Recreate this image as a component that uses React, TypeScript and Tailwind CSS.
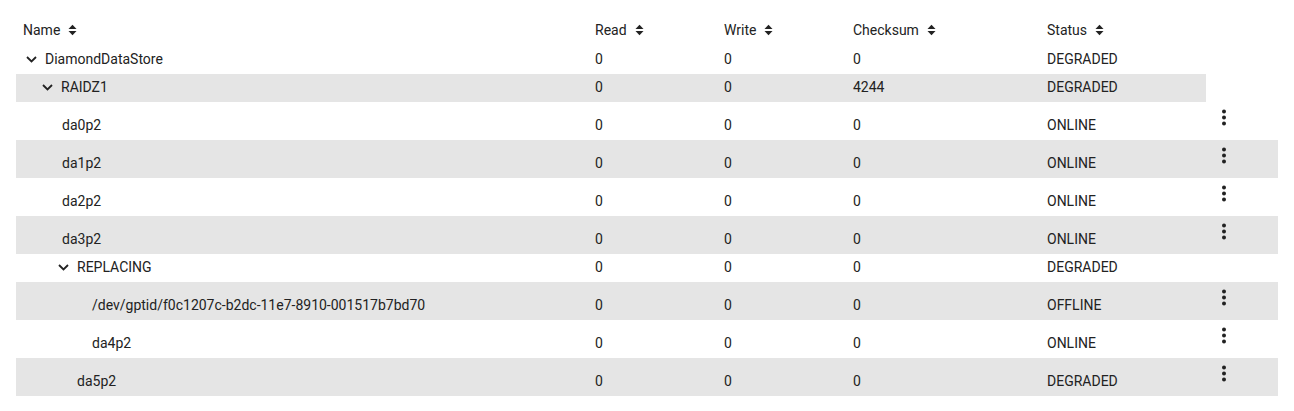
import React from "react";

type Row = {
  name: string;
  indent: number;
  chevron?: boolean;
  read: string;
  write: string;
  checksum: string;
  status: string;
  action: boolean;
  gray: boolean;
};

const rows: Row[] = [
  { name: "DiamondDataStore", indent: 29, chevron: true, read: "0", write: "0", checksum: "0", status: "DEGRADED", action: false, gray: false },
  { name: "RAIDZ1", indent: 45, chevron: true, read: "0", write: "0", checksum: "4244", status: "DEGRADED", action: false, gray: true },
  { name: "da0p2", indent: 46, read: "0", write: "0", checksum: "0", status: "ONLINE", action: true, gray: false },
  { name: "da1p2", indent: 46, read: "0", write: "0", checksum: "0", status: "ONLINE", action: true, gray: true },
  { name: "da2p2", indent: 46, read: "0", write: "0", checksum: "0", status: "ONLINE", action: true, gray: false },
  { name: "da3p2", indent: 46, read: "0", write: "0", checksum: "0", status: "ONLINE", action: true, gray: true },
  { name: "REPLACING", indent: 61, chevron: true, read: "0", write: "0", checksum: "0", status: "DEGRADED", action: false, gray: false },
  { name: "/dev/gptid/f0c1207c-b2dc-11e7-8910-001517b7bd70", indent: 76, read: "0", write: "0", checksum: "0", status: "OFFLINE", action: true, gray: true },
  { name: "da4p2", indent: 76, read: "0", write: "0", checksum: "0", status: "ONLINE", action: true, gray: false },
  { name: "da5p2", indent: 61, read: "0", write: "0", checksum: "0", status: "DEGRADED", action: true, gray: true },
];

function SortIcon() {
  return (
    <svg width="9" height="12" viewBox="0 0 9 12" className="ml-[8px] shrink-0">
      <path d="M0.5 5 L4.5 0.8 L8.5 5 Z" fill="#222" />
      <path d="M0.5 7 L4.5 11.2 L8.5 7 Z" fill="#222" />
    </svg>
  );
}

function Chevron() {
  return (
    <svg width="11" height="7" viewBox="0 0 11 7" className="absolute" style={{ left: -19, top: 5 }}>
      <path d="M1 1 L5.5 5.5 L10 1" stroke="#222" strokeWidth="1.8" fill="none" />
    </svg>
  );
}

function Dots() {
  return (
    <svg width="6" height="18" viewBox="0 0 6 18">
      <circle cx="3" cy="2.5" r="2" fill="#222" />
      <circle cx="3" cy="8.5" r="2" fill="#222" />
      <circle cx="3" cy="14.5" r="2" fill="#222" />
    </svg>
  );
}

const cols = "grid grid-cols-[572px_129px_129px_194px_166px]";

export default function App() {
  return (
    <div
      className="w-[1294px] h-[411px] bg-white text-[14px] text-[#222] pl-[16px] pt-[16px]"
      style={{ fontFamily: "Roboto, 'Liberation Sans', sans-serif" }}
    >
      <div className="flex h-[28px] items-center">
        <div className={cols}>
          <div className="flex items-center pl-[7px] leading-[16px]">Name<SortIcon /></div>
          <div className="flex items-center pl-[7px] leading-[16px]">Read<SortIcon /></div>
          <div className="flex items-center pl-[7px] leading-[16px]">Write<SortIcon /></div>
          <div className="flex items-center pl-[7px] leading-[16px]">Checksum<SortIcon /></div>
          <div className="flex items-center pl-[7px] leading-[16px]">Status<SortIcon /></div>
        </div>
      </div>
      <div className="mt-[2px]">
        {rows.map((r, i) => (
          <div key={i} className="flex">
            <div
              className={
                (r.gray ? "bg-[#e5e5e5] " : "") +
                (r.action ? "h-[38px] w-[1262px] flex" : "h-[28px] w-[1190px] flex")
              }
            >
              <div className={cols + (r.action ? " pt-[15px]" : " items-center pb-[2px]")}>
                <div className="relative leading-[16px]" style={{ paddingLeft: r.indent }}>
                  <span className="relative">
                    {r.chevron && <Chevron />}
                    {r.name}
                  </span>
                </div>
                <div className="pl-[7px] leading-[16px]">{r.read}</div>
                <div className="pl-[7px] leading-[16px]">{r.write}</div>
                <div className="pl-[7px] leading-[16px]">{r.checksum}</div>
                <div className="pl-[7px] leading-[16px]">{r.status}</div>
              </div>
              {r.action && (
                <div className="w-[72px] flex justify-start pl-[15px] pt-[7px]">
                  <Dots />
                </div>
              )}
            </div>
          </div>
        ))}
      </div>
    </div>
  );
}
